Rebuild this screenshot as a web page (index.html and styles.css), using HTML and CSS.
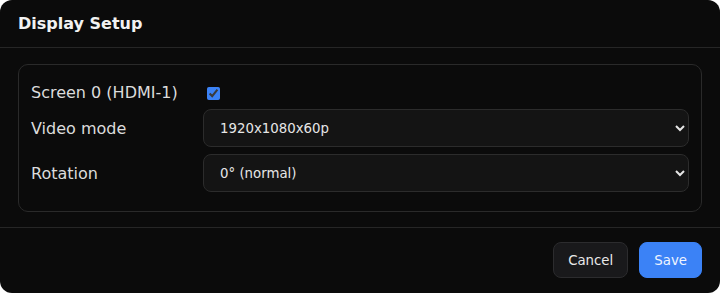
FILE: index.html
```html
<!DOCTYPE html>
<html>
<head>
<meta charset="utf-8">
<link rel="stylesheet" href="styles.css">
</head>
<body>
<div class="dialog">
  <div class="header"><h1 class="title">Display Setup</h1></div>
  <div class="content">
    <fieldset class="group">
      <div class="grid">
        <label class="label">Screen 0 (HDMI-1)</label>
        <div class="cell"><input type="checkbox" class="check" checked></div>
        <label class="label">Video mode</label>
        <select class="select"><option>1920x1080x60p</option></select>
        <label class="label">Rotation</label>
        <select class="select"><option>0° (normal)</option></select>
      </div>
    </fieldset>
  </div>
  <div class="footer">
    <button class="btn btn-cancel">Cancel</button>
    <button class="btn btn-save">Save</button>
  </div>
</div>
</body>
</html>
```
FILE: styles.css
```css
html, body {
  margin: 0;
  padding: 0;
  background: #ffffff;
}
body {
  font-family: "DejaVu Sans", sans-serif;
  color-scheme: dark;
}
.dialog {
  width: 720px;
  height: 293px;
  box-sizing: border-box;
  background: #0b0b0b;
  border-radius: 12px;
  display: flex;
  flex-direction: column;
  overflow: hidden;
}
.header {
  height: 48px;
  box-sizing: border-box;
  border-bottom: 1px solid #262626;
  display: flex;
  align-items: center;
  padding: 0 18px;
  flex: none;
}
.title {
  margin: 0;
  font-size: 16px;
  font-weight: bold;
  color: #f2f2f2;
}
.content {
  padding: 16px 18px 15px;
  border-bottom: 1px solid #262626;
  flex: none;
}
.group {
  margin: 0;
  border: 1px solid #2a2a2a;
  border-radius: 10px;
  padding: 18px 12px 19px 12px;
}
.grid {
  display: grid;
  grid-template-columns: 172px 1fr;
  row-gap: 7px;
  align-items: center;
}
.label {
  font-size: 16px;
  color: #dcdcdc;
}
.cell {
  display: flex;
  align-items: center;
  height: 19px;
}
.check {
  margin: 1px 0 0 4px;
  width: 13px;
  height: 13px;
  accent-color: #3b82f6;
}
.select {
  height: 38px;
  background: #141414;
  border: 1px solid #2c2c2c;
  border-radius: 8px;
  color: #e6e6e6;
  font-family: "DejaVu Sans", sans-serif;
  font-size: 13.333px;
  padding: 0 8px 0 12px;
}
.footer {
  flex: none;
  display: flex;
  justify-content: flex-end;
  align-items: flex-start;
  gap: 11px;
  padding: 14px 18px 0;
}
.btn {
  height: 36px;
  border-radius: 8px;
  font-family: "DejaVu Sans", sans-serif;
  font-size: 13.333px;
  padding: 0 14px;
  cursor: pointer;
}
.btn-cancel {
  background: #19191b;
  border: 1px solid #2c2c2e;
  color: #e8e8e8;
}
.btn-save {
  background: #3b82f6;
  border: 1px solid #3b82f6;
  color: #eef4ff;
}
```
